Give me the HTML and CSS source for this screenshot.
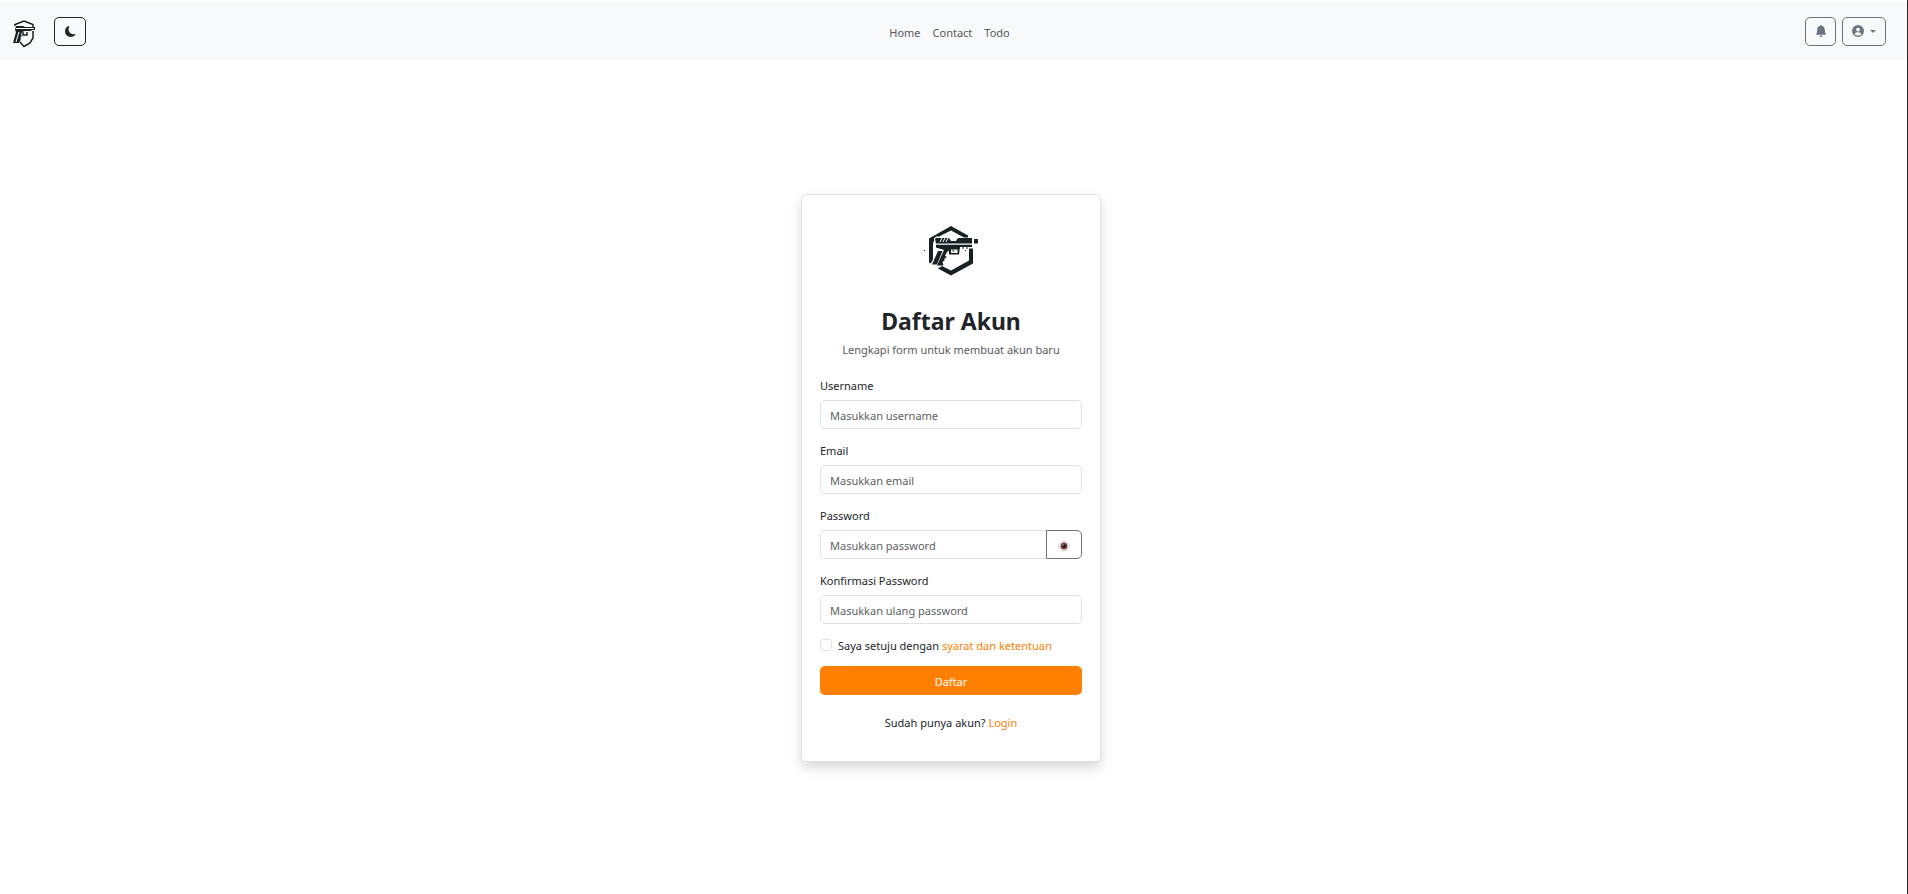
FILE: index.html
```html
<!DOCTYPE html>
<html lang="id">
<head>
<meta charset="utf-8">
<meta name="viewport" content="width=device-width, initial-scale=1">
<title>Daftar Akun</title>
<link rel="stylesheet" href="styles.css">
</head>
<body>
<header class="navbar">
  <div class="nav-start">
    <a class="brand" href="#" aria-label="Beranda">
      <svg class="brand-logo" viewBox="0 0 24 28" aria-hidden="true">
        <path class="line" d="M2 6V4.500L11 1 20 4.500V7"/>
        <path class="ink" d="M3 6H10L12 7H22V10H19L18 11H12L9 12 8 15 9 16 7 18 8 19 6 23H0L3 12 2 10Z"/>
        <path class="cut" d="M3 8.500H21M6 12 3 22M14 6H18"/>
        <path class="line" d="M20 11V18L17 23 11 26.500 7 22M10 12V15H14V12"/>
      </svg>
    </a>
    <button class="icon-button theme" type="button" aria-label="Ganti tema">
      <svg viewBox="0 0 16 16" aria-hidden="true"><path d="M6 .278a.77.77 0 0 1 .08.858 7.200 7.200 0 0 0-.878 3.460c0 4.021 3.278 7.277 7.318 7.277q.792-.001 1.533-.16a.79.79 0 0 1 .81.316.73.73 0 0 1-.031.893A8.350 8.350 0 0 1 8.344 16C3.734 16 0 12.286 0 7.710 0 4.266 2.114 1.312 5.124.06A.75.75 0 0 1 6 .278"/></svg>
    </button>
  </div>
  <nav class="nav-links">
    <a href="#">Home</a>
    <a href="#">Contact</a>
    <a href="#">Todo</a>
  </nav>
  <div class="nav-end">
    <button class="icon-button bell" type="button" aria-label="Notifikasi">
      <svg viewBox="0 0 16 16" aria-hidden="true"><path d="M8 16a2 2 0 0 0 2-2H6a2 2 0 0 0 2 2m.995-14.901a1 1 0 1 0-1.990 0A5 5 0 0 0 3 6c0 1.098-.5 6-2 7h14c-1.500-1-2-5.902-2-7 0-2.420-1.720-4.440-4.005-4.901"/></svg>
    </button>
    <button class="icon-button" type="button" aria-label="Akun">
      <svg viewBox="0 0 16 16" aria-hidden="true"><path fill-rule="evenodd" d="M8 0a8 8 0 1 0 0 16A8 8 0 0 0 8 0M5.500 6a2.500 2.500 0 1 1 5 0 2.500 2.500 0 0 1-5 0M3.500 12.500c.8-2 2.300-2.700 4.500-2.700s3.700.7 4.500 2.700A6.500 6.500 0 0 1 8 14a6.500 6.500 0 0 1-4.500-1.500"/></svg>
      <span class="caret"></span>
    </button>
  </div>
</header>
<main class="page">
  <form class="card">
    <svg class="logo" viewBox="0 0 54 50" aria-hidden="true">
      <path class="ink" d="M27 0 44 9.500V11.500H40L27 4.500 15 10.500H12L10 12.500V15L9 17V33L7 37.500 5 36.500V12.500Z"/>
      <path class="ink" d="M45 22.500H49V37.500L27 49.500 14 42.500 18 40 27 44.500 45 34.500Z"/>
      <path class="ink" d="M11 13 12 12H25L27 15H32L34 12H48V17.500H12Z"/>
      <path class="cut" d="M16 16 18 12M19 16 21 12M22 16 24 12"/>
      <path class="ink" d="M12 19H48V21H36L35 28.500H25V24.500L23 26 21 30 23 31 20 33 21 34 18.500 36 19.500 39.500H13L20 24 12 21.500Z"/>
      <path class="hole" d="M27 23.500H33.500V27H27Z"/>
      <path class="ink" d="M14 25H18.500L13 38.500H8Z"/>
      <path class="ink" d="M28 23 31 25.500H29ZM50 13H54V17.500H50ZM38 21.500H40V22.500H38ZM42 21.500H44V22.500H42ZM0 24H1V25H0ZM41 24H42V25H41Z"/>
      <path class="rail" d="M12 18H48"/>
    </svg>
    <h1>Daftar Akun</h1>
    <p class="subtitle">Lengkapi form untuk membuat akun baru</p>
    <div class="field">
      <label for="username">Username</label>
      <input class="control" id="username" type="text" placeholder="Masukkan username">
    </div>
    <div class="field">
      <label for="email">Email</label>
      <input class="control" id="email" type="email" placeholder="Masukkan email">
    </div>
    <div class="field">
      <label for="password">Password</label>
      <div class="group">
        <input class="control" id="password" type="password" placeholder="Masukkan password">
        <button class="reveal" type="button" aria-label="Tampilkan password">
          <svg viewBox="0 0 14 12" aria-hidden="true">
            <path class="eye-white" d="M1 6Q3 1 7 1T13 6Q11 11 7 11T1 6Z"/>
            <circle class="iris" cx="7" cy="6" r="3.500"/>
            <circle class="pupil" cx="7" cy="6" r="1.800"/>
            <circle class="glint" cx="6" cy="5" r=".8"/>
          </svg>
        </button>
      </div>
    </div>
    <div class="field">
      <label for="confirm">Konfirmasi Password</label>
      <input class="control" id="confirm" type="password" placeholder="Masukkan ulang password">
    </div>
    <div class="check">
      <input id="terms" type="checkbox">
      <label for="terms">Saya setuju dengan <a href="#">syarat dan ketentuan</a></label>
    </div>
    <button class="submit" type="submit">Daftar</button>
    <p class="login">Sudah punya akun? <a href="#">Login</a></p>
  </form>
</main>
</body>
</html>
```

FILE: styles.css
```css
* { box-sizing: border-box; }

body {
  display: flex;
  flex-direction: column;
  min-height: 100vh;
  margin: 0;
  padding-top: 2px;
  border-right: 1px solid #2b2b2e;
  background: #fff;
  color: #212529;
  font: 11px/20px "Noto Sans", sans-serif;
}

button, input { font: inherit; }
a { color: #ff8000; text-decoration: none; }
h1, p { margin: 0; }

.navbar {
  display: grid;
  grid-template-columns: 1fr auto 1fr;
  align-items: center;
  height: 58px;
  padding: 0 21px 0 13px;
  background: #f8f9fb;
}
.nav-start, .nav-end, .nav-links { display: flex; align-items: center; }
.nav-start { gap: 17px; }
.nav-end { justify-content: flex-end; gap: 6px; }
.nav-links { gap: 12px; padding-top: 4px; }
.nav-links a { color: #585a5c; }
.brand { display: flex; padding-top: 6px; }
.brand-logo { width: 24px; height: 28px; }

.icon-button {
  display: flex;
  align-items: center;
  justify-content: center;
  gap: 6px;
  height: 29px;
  padding: 0 9px;
  border: 1px solid #6c757d;
  border-radius: 5px;
  background: transparent;
  color: #6c757d;
}
.icon-button svg { flex: none; width: 12px; height: 12px; fill: currentColor; }
.theme { width: 32px; border-color: #212529; color: #212529; }
.icon-button.theme svg { width: 11px; height: 11px; }
.bell { width: 31px; }
.caret {
  border: 3px solid transparent;
  border-top-color: currentColor;
  border-bottom: 0;
}

.page {
  flex: 1;
  display: flex;
  align-items: center;
  justify-content: center;
  padding: 2px 5px 0 0;
}
.card {
  display: flex;
  flex-direction: column;
  width: 300px;
  padding: 18px 18px 28px;
  border: 1px solid #dee2e6;
  border-radius: 5px;
  background: #fff;
  box-shadow: 0 6px 12px rgba(0, 0, 0, .15);
}
.logo { align-self: center; width: 54px; height: 50px; margin: 13px 0 30px; }
.ink { fill: #172022; }
.hole { fill: #fff; }
.cut { fill: none; stroke: #fff; stroke-width: 1; }
.rail { fill: none; stroke: #8b9092; stroke-width: 1; }
.line { fill: none; stroke: #172022; stroke-width: 1.500; }

h1 { font-size: 23px; font-weight: 700; line-height: 30px; text-align: center; }
.subtitle { margin: 4px 0 16px; color: #585a5c; text-align: center; }

.field { display: flex; flex-direction: column; gap: 4px; margin-bottom: 12px; }
.control {
  width: 100%;
  height: 29px;
  padding: 2px 9px 0;
  border: 1px solid #dee2e6;
  border-radius: 5px;
  background: #fff;
  color: #212529;
}
.control::placeholder { color: #5b5f64; opacity: 1; }
.group { display: flex; }
.group .control { flex: 1; min-width: 0; border-right: 0; border-radius: 5px 0 0 5px; }
.reveal {
  display: flex;
  align-items: center;
  justify-content: center;
  width: 36px;
  padding: 2px 0 0;
  border: 1px solid #6c757d;
  border-radius: 0 5px 5px 0;
  background: #fff;
}
.reveal svg { width: 14px; height: 12px; }
.eye-white { fill: #fafafa; stroke: #d0d0d0; }
.iris { fill: #7a4538; }
.pupil { fill: #111; }
.glint { fill: #a9b5bd; }

.check { display: flex; gap: 6px; margin-bottom: 10px; }
.check input {
  appearance: none;
  width: 12px;
  height: 12px;
  margin: 3px 0 0;
  border: 1px solid #dee2e6;
  border-radius: 3px;
  background: #fff;
}
.submit {
  height: 29px;
  padding: 2px 9px 0;
  border: 0;
  border-radius: 5px;
  background: #ff8000;
  color: #fff;
}
.login { margin-top: 18px; text-align: center; }
```
